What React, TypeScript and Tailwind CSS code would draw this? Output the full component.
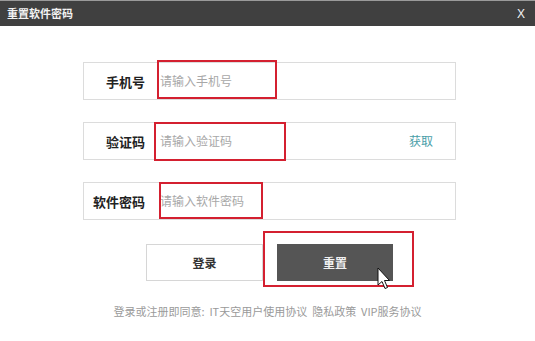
import React from "react";

const font = { fontFamily: '"Noto Sans CJK SC", "Noto Sans", sans-serif' };

function Field({ label, placeholder, extra }: { label: string; placeholder: string; extra?: React.ReactNode }) {
  return (
    <div className="flex h-[38px] items-center border border-[#dcdcdc] bg-white">
      <div className="w-[61px] text-right text-[13px] font-bold leading-none text-[#222]">{label}</div>
      <div className="ml-[15px] flex-1 text-[12px] leading-none text-[#a8a8a8]">{placeholder}</div>
      {extra}
    </div>
  );
}

export default function App() {
  return (
    <div className="relative h-[341px] w-[535px] overflow-hidden bg-white" style={font}>
      <div className="h-[1px] bg-[#9a9a9a]" />
      <div className="flex h-[25px] items-center justify-between bg-[#404040] pl-[7px] pr-[10px]">
        <span className="text-[11px] font-bold leading-none text-[#f2f2f2]">重置软件密码</span>
        <span className="text-[12px] leading-none text-[#f2f2f2]" style={{ fontFamily: '"Liberation Sans", sans-serif' }}>X</span>
      </div>

      <div className="ml-[83px] mt-[36px] flex w-[373px] flex-col gap-[22px]">
        <Field label="手机号" placeholder="请输入手机号" />
        <Field
          label="验证码"
          placeholder="请输入验证码"
          extra={<span className="mr-[22px] text-[12px] leading-none text-[#4a9ea8]">获取</span>}
        />
        <Field label="软件密码" placeholder="请输入软件密码" />
      </div>

      <div className="ml-[146px] mt-[24px] flex gap-[14px]">
        <div className="flex h-[37px] w-[117px] items-center justify-center border border-[#d6d6d6] bg-white text-[12px] font-bold text-[#333]">
          登录
        </div>
        <div className="flex h-[37px] w-[116px] items-center justify-center bg-[#555555] text-[12px] font-bold text-[#f0f0f0]">
          重置
        </div>
      </div>

      <div className="mt-[22px] text-center text-[11px] leading-4 text-[#9a9a9a]">
        登录或注册即同意:&nbsp;&nbsp;IT天空用户使用协议&nbsp;&nbsp;隐私政策&nbsp;&nbsp;VIP服务协议
      </div>

      {/* red annotation boxes */}
      <div className="absolute left-[157px] top-[60px] h-[39px] w-[120px] border-2 border-[#d42030]" />
      <div className="absolute left-[154px] top-[122px] h-[39px] w-[132px] border-2 border-[#d42030]" />
      <div className="absolute left-[159px] top-[182px] h-[37px] w-[104px] border-2 border-[#d42030]" />
      <div className="absolute left-[263px] top-[231px] h-[56px] w-[151px] border-2 border-[#d42030]" />

      {/* cursor */}
      <svg className="absolute left-[377px] top-[267px]" width="16" height="24" viewBox="0 0 16 24">
        <path d="M1 1 L1 18 L5 14.5 L8 21.5 L10.5 20.5 L7.5 13.5 L12.5 13.5 Z" fill="#fff" stroke="#111" strokeWidth="1" strokeLinejoin="round" />
      </svg>
    </div>
  );
}
